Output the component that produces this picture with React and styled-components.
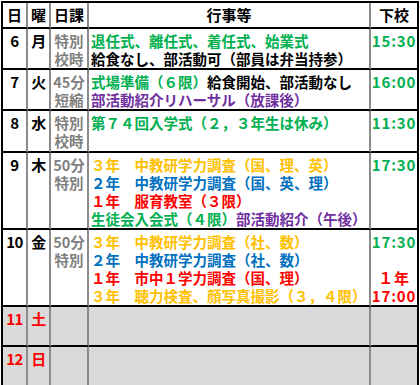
import React from 'react';
import styled, { createGlobalStyle } from 'styled-components';

const GlobalStyle = createGlobalStyle`
  * { box-sizing: border-box; }
  body {
    margin: 0;
    background: #ffffff;
  }
`;

const COLORS = {
  green: '#00b050',
  black: '#000000',
  purple: '#7030a0',
  orange: '#ffc000',
  blue: '#0070c0',
  red: '#ff0000',
  gray: '#808080',
};

const Table = styled.table`
  border-collapse: separate;
  border-spacing: 0;
  table-layout: fixed;
  width: 418px;
  margin: 1px 0 0 1px;
  border-left: 2px solid #000;
  border-top: 2px solid #000;
  font-family: "Noto Sans CJK JP", "Noto Sans", sans-serif;
  font-weight: 700;
  font-size: 14.5px;
  line-height: 18px;
`;

const Row = styled.tr`
  height: ${(p) => p.$h}px;
`;

const HeadCell = styled.th`
  width: ${(p) => p.$w}px;
  border-right: 2px solid ${(p) => (p.$last ? '#000' : '#8c8c8c')};
  border-bottom: 2px solid #000;
  padding: 3px 0 0;
  text-align: center;
  vertical-align: top;
  color: #000;
  font-size: 15px;
  font-weight: 700;
`;

const Cell = styled.td`
  border-right: 2px solid ${(p) => (p.$last ? '#000' : '#8c8c8c')};
  border-bottom: 2px solid #000;
  padding: 3px 0 0 ${(p) => (p.$align === 'left' ? '2px' : '0')};
  text-align: ${(p) => p.$align || 'center'};
  vertical-align: top;
  background: ${(p) => (p.$off ? '#d9d9d9' : '#ffffff')};
  color: ${(p) => COLORS[p.$color] || '#000'};
  white-space: nowrap;
  overflow: hidden;
`;

const DateNum = styled.div`
  font-size: 15px;
  letter-spacing: -0.5px;
  color: ${(p) => (p.$holiday ? COLORS.red : '#000')};
`;

const Line = styled.div`
  color: ${(p) => COLORS[p.$color] || '#000'};
  height: 18px;
`;

const Part = styled.span`
  color: ${(p) => COLORS[p.$color]};
`;

const Time = styled.div`
  color: ${(p) => COLORS[p.$color]};
  font-size: 15px;
  letter-spacing: 0.8px;
  height: 18px;
`;

const days = [
  {
    d: '6', w: '月', h: 41, kind: ['特別', '校時'],
    lines: [
      [['green', '退任式、離任式、着任式、始業式']],
      [['black', '給食なし、部活動可（部員は弁当持参）']],
    ],
    out: [['green', '15:30']],
  },
  {
    d: '7', w: '火', h: 39, kind: ['45分', '短縮'],
    lines: [
      [['green', '式場準備（６限）'], ['black', '給食開始、部活動なし']],
      [['purple', '部活動紹介リハーサル（放課後）']],
    ],
    out: [['green', '16:00']],
  },
  {
    d: '8', w: '水', h: 42, kind: ['特別', '校時'],
    lines: [[['green', '第７４回入学式（２，３年生は休み）']]],
    out: [['green', '11:30']],
  },
  {
    d: '9', w: '木', h: 77, kind: ['50分', '特別'],
    lines: [
      [['orange', '３年　中教研学力調査（国、理、英）']],
      [['blue', '２年　中教研学力調査（国、英、理）']],
      [['red', '１年　服育教室（３限）']],
      [['green', '生徒会入会式（４限）'], ['purple', '部活動紹介（午後）']],
    ],
    out: [['green', '17:30']],
  },
  {
    d: '10', w: '金', h: 76, kind: ['50分', '特別'],
    lines: [
      [['orange', '３年　中教研学力調査（社、数）']],
      [['blue', '２年　中教研学力調査（社、数）']],
      [['red', '１年　市中１学力調査（国、理）']],
      [['orange', '３年　聴力検査、顔写真撮影（３，４限）']],
    ],
    out: [['green', '17:30'], ['green', ''], ['red', '１年'], ['red', '17:00']],
  },
  { d: '11', w: '土', h: 40, off: true, kind: [], lines: [], out: [] },
  { d: '12', w: '日', h: 40, off: true, kind: [], lines: [], out: [] },
];

const Schedule = () => (
  <Table>
    <thead>
      <Row $h={26}>
        <HeadCell $w={25}>日</HeadCell>
        <HeadCell $w={23}>曜</HeadCell>
        <HeadCell $w={38}>日課</HeadCell>
        <HeadCell $w={282}>行事等</HeadCell>
        <HeadCell $w={48} $last>下校</HeadCell>
      </Row>
    </thead>
    <tbody>
      {days.map((day) => (
        <Row key={day.d} $h={day.h}>
          <Cell $off={day.off}>
            <DateNum $holiday={day.off}>{day.d}</DateNum>
          </Cell>
          <Cell $off={day.off}>
            <DateNum $holiday={day.off}>{day.w}</DateNum>
          </Cell>
          <Cell $off={day.off} $color="gray">
            {day.kind.map((k) => (
              <Line key={k} $color="gray">{k}</Line>
            ))}
          </Cell>
          <Cell $off={day.off} $align="left">
            {day.lines.map((parts, i) => (
              <Line key={i}>
                {parts.map(([c, t]) => (
                  <Part key={t} $color={c}>{t}</Part>
                ))}
              </Line>
            ))}
          </Cell>
          <Cell $off={day.off} $last>
            {day.out.map(([c, t], i) => (
              <Time key={i} $color={c}>{t}</Time>
            ))}
          </Cell>
        </Row>
      ))}
    </tbody>
  </Table>
);

const App = () => (
  <>
    <GlobalStyle />
    <Schedule />
  </>
);

export default App;
